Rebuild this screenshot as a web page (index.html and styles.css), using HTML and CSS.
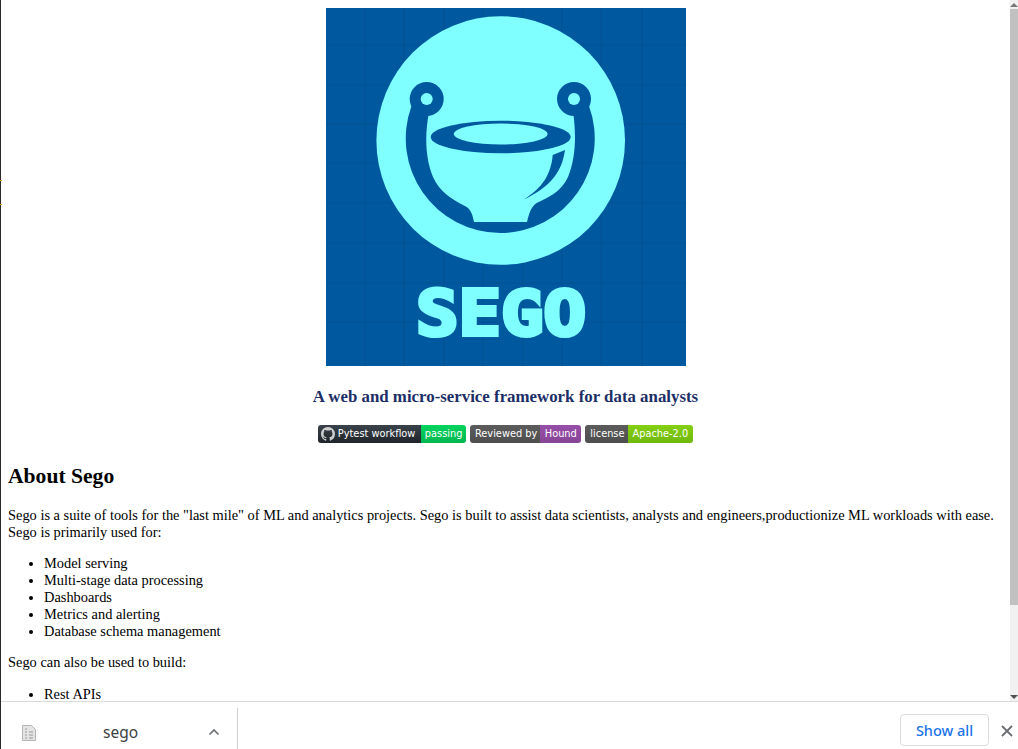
FILE: index.html
```html
<!DOCTYPE html>
<html lang="en">
<head>
<meta charset="utf-8">
<title>Sego</title>
<link rel="stylesheet" href="styles.css">
</head>
<body>
<div class="window">
  <span class="speck speck-a"></span>
  <span class="speck speck-b"></span>
  <div class="viewport">
    <main class="page">
      <div class="logo-row">
        <svg class="logo" viewBox="326 8 360 358" width="360" height="358" role="img" aria-label="Sego logo">
          <rect x="326" y="8" width="360" height="358" fill="#00589e"/>
          <path class="grid" d="M365 8V366M404 8V366M444 8V366M483 8V366M523 8V366M562 8V366M601 8V366M642 8V366M326 45H686M326 85H686M326 124H686M326 163H686M326 203H686M326 243H686M326 283H686M326 322H686"/>
          <circle cx="500.7" cy="140.5" r="124.3" fill="#7fffff"/>
          <path fill="#00589e" d="M411.5 106A94.5 94.5 0 1 0 589 106L573.5 115C576 135 576 158 568 177C561 192 549 197 536.7 203C531 207 529.5 212 527 222H474C472 212 470 208 463 205C450 198 440 192 433 177C425 158 425 135 428.5 115Z"/>
          <circle cx="426.7" cy="99" r="17" fill="#00589e"/>
          <circle cx="574" cy="99" r="17" fill="#00589e"/>
          <circle cx="426.7" cy="99" r="6" fill="#7fffff"/>
          <circle cx="574" cy="99" r="6" fill="#7fffff"/>
          <ellipse cx="500.7" cy="137" rx="70" ry="16.3" fill="#00589e"/>
          <ellipse cx="500.7" cy="134" rx="47" ry="10.5" fill="#7fffff"/>
          <path fill="#00589e" d="M552.7 155L565 150C562 171 552 186 524 199.5C542 188 551 175 552.7 155Z"/>
          <text class="wordmark" x="416" y="335" textLength="170" lengthAdjust="spacingAndGlyphs">SEGO</text>
        </svg>
      </div>
      <h3 class="tagline">A web and micro-service framework for data analysts</h3>
      <div class="badges">
        <span class="badge">
          <span class="badge-label label-dark">
            <svg class="gh" viewBox="0 0 16 16" width="14" height="14"><path fill="#fff" d="M8 0C3.58 0 0 3.58 0 8c0 3.54 2.29 6.53 5.47 7.59.4.07.55-.17.55-.38 0-.19-.01-.82-.01-1.49-2.01.37-2.53-.49-2.69-.94-.09-.23-.48-.94-.82-1.13-.28-.15-.68-.52-.01-.53.63-.01 1.08.58 1.23.82.72 1.21 1.87.87 2.33.66.07-.52.28-.87.51-1.07-1.78-.2-3.64-.89-3.64-3.95 0-.87.31-1.59.82-2.15-.08-.2-.36-1.02.08-2.12 0 0 .67-.21 2.2.82.64-.18 1.32-.27 2-.27.68 0 1.36.09 2 .27 1.53-1.04 2.2-.82 2.2-.82.44 1.1.16 1.92.08 2.12.51.56.82 1.27.82 2.15 0 3.07-1.87 3.75-3.65 3.95.29.25.54.73.54 1.48 0 1.07-.01 1.93-.01 2.2 0 .21.15.46.55.38A8.013 8.013 0 0016 8c0-4.42-3.58-8-8-8z"/></svg>
            Pytest workflow
          </span>
          <span class="badge-value value-green">passing</span>
        </span>
        <span class="badge">
          <span class="badge-label">Reviewed by</span>
          <span class="badge-value value-purple">Hound</span>
        </span>
        <span class="badge">
          <span class="badge-label">license</span>
          <span class="badge-value value-lime">Apache-2.0</span>
        </span>
      </div>
      <h2 class="section-title">About Sego</h2>
      <p class="copy">Sego is a suite of tools for the "last mile" of ML and analytics projects. Sego is built to assist data scientists, analysts and engineers,productionize ML workloads with ease. Sego is primarily used for:</p>
      <ul class="list">
        <li>Model serving</li>
        <li>Multi-stage data processing</li>
        <li>Dashboards</li>
        <li>Metrics and alerting</li>
        <li>Database schema management</li>
      </ul>
      <p class="copy">Sego can also be used to build:</p>
      <ul class="list">
        <li>Rest APIs</li>
      </ul>
    </main>
    <div class="scrollbar">
      <span class="arrow arrow-up"></span>
      <span class="thumb"></span>
      <span class="arrow arrow-down"></span>
    </div>
  </div>
  <footer class="downloads">
    <div class="download-item">
      <svg class="file-icon" viewBox="0 0 14 16" width="14" height="16">
        <path fill="#e4e4e4" stroke="#b4b4b4" d="M.5.5H9.5L13.5 4.5V15.5H.5Z"/>
        <path fill="none" stroke="#9a9a9a" d="M3 4H5M3 7H5M7 7H11M3 10H5M7 10H11M3 13H5M7 13H11"/>
      </svg>
      <span class="file-name">sego</span>
      <svg class="chevron" viewBox="0 0 12 8" width="12" height="8"><path fill="none" stroke="#6b6e72" stroke-width="1.6" d="M1.5 6.5L6 2L10.5 6.5"/></svg>
    </div>
    <div class="download-actions">
      <button class="show-all" type="button">Show all</button>
      <svg class="close" viewBox="0 0 12 12" width="12" height="12"><path stroke="#6b6e72" stroke-width="1.8" d="M1 1L11 11M11 1L1 11"/></svg>
    </div>
  </footer>
</div>
</body>
</html>
```
FILE: styles.css
```css
* { box-sizing: border-box; }
html, body { margin: 0; height: 100%; overflow: hidden; }
body { background: #fff; color: #000; font-family: "Liberation Serif", "Times New Roman", serif; }

.window {
  position: relative;
  display: flex;
  flex-direction: column;
  height: 749px;
  border-left: 1px solid #2b2b2b;
}
.speck { position: absolute; left: -1px; width: 2px; height: 1px; background: #d9a900; }
.speck-a { top: 180px; }
.speck-b { top: 204px; }

.viewport { flex: 1; min-height: 0; display: flex; overflow: hidden; }
.page { flex: 1; min-width: 0; padding: 8px 7px 0; overflow: hidden; font-size: 14.4px; }

.logo-row { display: flex; justify-content: center; }
.logo { display: block; }
.grid { fill: none; stroke: #00528f; stroke-width: 1.2; opacity: .8; }
.wordmark { font-family: "DejaVu Sans Mono", monospace; font-weight: 700; font-size: 62px; fill: #7fffff; stroke: #7fffff; stroke-width: 4; stroke-linejoin: miter; }

.tagline { margin: 20.6px 0 0; text-align: center; font-size: 16.85px; font-weight: 700; color: #1c2e66; }

.badges { display: flex; justify-content: center; gap: 4px; margin-top: 18px; }
.badge { display: inline-flex; height: 18px; border-radius: 3px; overflow: hidden; font-family: "DejaVu Sans", Verdana, sans-serif; font-size: 9.8px; line-height: 18px; color: #fff; }
.badge-label { display: inline-flex; align-items: center; padding: 0 3px 0 5px; background: linear-gradient(#5c5c5c, #4e4e4e); }
.label-dark { background: linear-gradient(#3a424b, #1f2429); padding: 0 6px 0 3px; }
.gh { margin-right: 3px; opacity: .75; }
.badge-value { padding: 0 4.5px; }
.value-green { background: linear-gradient(#05d35f, #00b84f); padding: 0 3.5px; }
.value-purple { background: linear-gradient(#974fa9, #874596); }
.value-lime { background: linear-gradient(#85d014, #6fb80c); padding: 0 5px; }

.section-title { margin: 21px 0 18px; font-size: 21.6px; font-weight: 700; }
.copy { margin: 14.4px 0; }
.list { margin: 14.4px 0; padding-left: 36px; }

.scrollbar { flex: none; width: 8px; display: flex; flex-direction: column; align-items: center; background: #f1f1f1; }
.arrow { flex: none; width: 8px; height: 9px; display: flex; align-items: center; justify-content: center; }
.arrow::before { content: ""; border-left: 4px solid transparent; border-right: 4px solid transparent; }
.arrow-up::before { border-bottom: 4px solid #777; }
.arrow-down::before { border-top: 4px solid #505050; }
.thumb { width: 100%; height: 596px; background: #c1c1c1; }
.arrow-down { margin-top: auto; }

.downloads { flex: none; height: 48px; display: flex; justify-content: space-between; border-top: 1px solid #d9d9d9; background: #fff; }
.download-item { width: 237px; margin-top: 6px; display: flex; align-items: center; border-right: 1px solid #cfcfcf; }
.file-icon { margin: 9px 0 0 21px; }
.file-name { margin: 6px 0 0 67px; font-family: "Noto Sans", "Open Sans", sans-serif; font-size: 15.5px; color: #3c4043; }
.chevron { margin: 6px 17px 0 auto; }
.download-actions { display: flex; align-items: center; }
.show-all { width: 89px; height: 32px; margin-top: 9px; padding: 0; border: 1px solid #dadce0; border-radius: 4px; background: #fff; color: #1a73e8; font-family: "Noto Sans", "Open Sans", sans-serif; font-size: 14.5px; font-weight: 500; }
.close { margin: 10px 5px 0 12px; }
```
